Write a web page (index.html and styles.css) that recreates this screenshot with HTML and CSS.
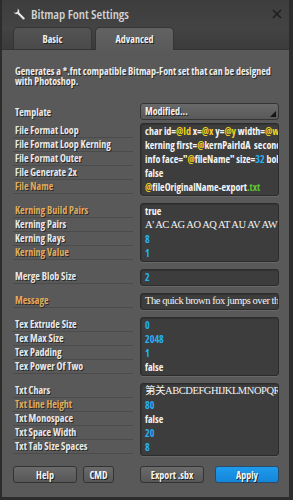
FILE: index.html
```html
<!DOCTYPE html>
<html lang="en">

<head>
    <meta charset="UTF-8">
    <meta name="viewport" content="width=device-width, initial-scale=1.0">
    <title>Bitmap Font Settings</title>
    <link rel="stylesheet" href="styles.css">
</head>

<body>
    <div class="janela">
        <div class="titulo">
            <svg class="chave" width="14" height="14" viewBox="0 0 14 14">
                <path transform="translate(14 0) scale(-1 1)" d="M9.5 1.2a3.3 3.3 0 0 0-3.1 4.3L1.4 10.5a1.3 1.3 0 0 0 1.9 1.9l5-5a3.3 3.3 0 0 0 4.3-3.1l-1.9 1.3-1.9-1.1-.2-2.2z" fill="#e6e6e6" stroke="#222" stroke-width=".6"/>
            </svg>
            <span class="titulo-texto">Bitmap Font Settings</span>
            <svg class="fechar" width="10" height="10" viewBox="0 0 10 10">
                <path d="M1 1l8 8M9 1l-8 8" stroke="#1e1e1e" stroke-width="1.6"/>
            </svg>
        </div>

        <div class="abas">
            <div class="aba">Basic</div>
            <div class="aba ativa">Advanced</div>
        </div>

        <main class="painel">
            <p class="descricao">Generates a *.fnt compatible Bitmap-Font set that can be designed with Photoshop.</p>

            <div class="grupo template">
                <div class="rotulos">
                    <div class="rotulo">Template</div>
                </div>
                <div class="seletor">Modified...</div>
            </div>

            <div class="grupo">
                <div class="rotulos">
                    <div class="rotulo">File Format Loop</div>
                    <div class="rotulo">File Format Loop Kerning</div>
                    <div class="rotulo">File Format Outer</div>
                    <div class="rotulo">File Generate 2x</div>
                    <div class="rotulo laranja">File Name</div>
                </div>
                <div class="caixa">
                    <div class="valor">char id=<span class="arroba">@Id</span> x=<span class="arroba">@x</span> y=<span class="arroba">@y</span> width=<span class="arroba">@width</span></div>
                    <div class="valor">kerning first=<span class="arroba">@</span>kernPairIdA&nbsp; second=<span class="arroba">@</span>kernPairIdB</div>
                    <div class="valor">info face="<span class="arroba">@</span>fileName" size=<span class="num">32</span> bold=0</div>
                    <div class="valor">false</div>
                    <div class="valor"><span class="arroba">@</span>fileOriginalName-export<span class="verde">.txt</span></div>
                </div>
            </div>

            <div class="grupo">
                <div class="rotulos">
                    <div class="rotulo laranja">Kerning Build Pairs</div>
                    <div class="rotulo">Kerning Pairs</div>
                    <div class="rotulo">Kerning Rays</div>
                    <div class="rotulo laranja">Kerning Value</div>
                </div>
                <div class="caixa">
                    <div class="valor">true</div>
                    <div class="valor serif">A' AC AG AO AQ AT AU AV AW AY</div>
                    <div class="valor num">8</div>
                    <div class="valor num">1</div>
                </div>
            </div>

            <div class="grupo">
                <div class="rotulos">
                    <div class="rotulo">Merge Blob Size</div>
                </div>
                <div class="caixa">
                    <div class="valor num">2</div>
                </div>
            </div>

            <div class="grupo">
                <div class="rotulos">
                    <div class="rotulo laranja">Message</div>
                </div>
                <div class="caixa">
                    <div class="valor serif">The quick brown fox jumps over the lazy dog</div>
                </div>
            </div>

            <div class="grupo">
                <div class="rotulos">
                    <div class="rotulo">Tex Extrude Size</div>
                    <div class="rotulo">Tex Max Size</div>
                    <div class="rotulo">Tex Padding</div>
                    <div class="rotulo">Tex Power Of Two</div>
                </div>
                <div class="caixa">
                    <div class="valor num">0</div>
                    <div class="valor num">2048</div>
                    <div class="valor num">1</div>
                    <div class="valor">false</div>
                </div>
            </div>

            <div class="grupo">
                <div class="rotulos">
                    <div class="rotulo">Txt Chars</div>
                    <div class="rotulo laranja">Txt Line Height</div>
                    <div class="rotulo">Txt Monospace</div>
                    <div class="rotulo">Txt Space Width</div>
                    <div class="rotulo">Txt Tab Size Spaces</div>
                </div>
                <div class="caixa">
                    <div class="valor serif">第关ABCDEFGHIJKLMNOPQRSTUVWXYZ</div>
                    <div class="valor num">80</div>
                    <div class="valor">false</div>
                    <div class="valor num">20</div>
                    <div class="valor num">8</div>
                </div>
            </div>

            <div class="botoes">
                <div class="esquerda">
                    <button class="botao help">Help</button>
                    <button class="botao cmd">CMD</button>
                </div>
                <div class="direita">
                    <button class="botao export">Export .sbx</button>
                    <button class="botao apply">Apply</button>
                </div>
            </div>
        </main>
    </div>
</body>

</html>
```

FILE: styles.css
```css
html,
body {
    margin: 0;
    padding: 0;
    background-color: #2c2c2c;
    font-family: 'Open Sans', 'Liberation Sans', sans-serif;
    font-size: 10px;
    font-stretch: 75%;
}

.janela {
    width: 287px;
    height: 497px;
    margin-left: 2px;
    background-color: #414141;
    display: flex;
    flex-direction: column;
}

.titulo {
    height: 27px;
    display: flex;
    align-items: center;
    padding: 0 7px 0 10px;
    background: linear-gradient(#3d3d3d, #434343);
}

.chave {
    margin-right: 5px;
}

.titulo-texto {
    flex: 1;
    color: #d4d4d4;
    font-size: 13px;
    font-stretch: 80%;
    font-weight: 600;
}

.fechar {
    margin-top: 1px;
}

.abas {
    display: flex;
    gap: 3px;
    padding-left: 11px;
    height: 22px;
    background: linear-gradient(#444444, #3b3b3b);
    border-bottom: 1px solid #333333;
}

.aba {
    width: 77px;
    border-radius: 5px 5px 0 0;
    background: linear-gradient(#545454, #4a4a4a);
    border: 1px solid #353535;
    border-bottom: none;
    color: #f0f0f0;
    font-weight: 700;
    text-align: center;
    line-height: 22px;
    text-shadow: 1px 1px 0 #222;
}

.aba.ativa {
    background: linear-gradient(#626262, #5a5a5a);
    margin-bottom: -1px;
}

.painel {
    flex: 1;
    background-color: #595959;
    padding: 16px 10px 0 11px;
}

.descricao {
    margin: 0 0 0 2px;
    color: #ececec;
    font-weight: 700;
    line-height: 10px;
    text-shadow: 1px 1px 0 #2a2a2a;
}

.grupo {
    display: grid;
    grid-template-columns: 120px 1fr;
    gap: 7px;
    margin-top: 7px;
}

.grupo.template {
    margin-top: 17px;
    margin-bottom: -4px;
}

.rotulos {
    padding-top: 1px;
}

.rotulo {
    height: 13px;
    line-height: 13px;
    padding-left: 2px;
    border-bottom: 1px solid #4b4b4b;
    color: #e8e8e8;
    font-weight: 700;
    text-shadow: 1px 1px 0 #2a2a2a;
}

.rotulo.laranja {
    color: #e0ac5c;
}

.template .rotulo {
    border-bottom: none;
    line-height: 17px;
}

.seletor {
    height: 15px;
    line-height: 15px;
    padding-left: 4px;
    border: 1px solid #353535;
    border-radius: 3px;
    background: linear-gradient(#6a6a6a, #585858);
    color: #f2f2f2;
    font-weight: 700;
    text-shadow: 1px 1px 0 #222;
    position: relative;
}

.seletor::after {
    content: '';
    position: absolute;
    right: 2px;
    bottom: 2px;
    border-left: 6px solid transparent;
    border-bottom: 6px solid #151515;
}

.caixa {
    background-color: #3d3d3d;
    border: 1px solid #2c2c2c;
    border-radius: 3px;
    box-shadow: inset 1px 1px 1px #333333, 0 1px 0 #676767;
    padding: 0 0 1px 4px;
    overflow: hidden;
}

.valor {
    height: 14px;
    line-height: 14px;
    white-space: nowrap;
    color: #f4f4f4;
    font-weight: 700;
}

.serif {
    font-family: 'Liberation Serif', 'Noto Sans CJK SC', serif;
    font-weight: 400;
    font-size: 10.5px;
    font-stretch: normal;
    letter-spacing: -0.45px;
}

.num {
    color: #27b0f2;
}

.arroba {
    color: #f2d21c;
}

.verde {
    color: #5cc531;
}

.botoes {
    display: flex;
    justify-content: space-between;
    margin-top: 10px;
}

.esquerda,
.direita {
    display: flex;
    gap: 6px;
}

.direita {
    gap: 11px;
}

.botao {
    height: 17px;
    padding: 0;
    border: 1px solid #333333;
    border-radius: 3px;
    background: linear-gradient(#6a6a6a, #575757);
    color: #f4f4f4;
    font-family: 'Open Sans', 'Liberation Sans', sans-serif;
    font-size: 10px;
    font-stretch: 75%;
    font-weight: 700;
    text-shadow: 1px 1px 0 #222;
}

.help,
.export,
.apply {
    width: 64px;
}

.cmd {
    width: 31px;
}

.apply {
    background: linear-gradient(#1f9bec, #1485d8);
    border-color: #2b4b6b;
}
```
